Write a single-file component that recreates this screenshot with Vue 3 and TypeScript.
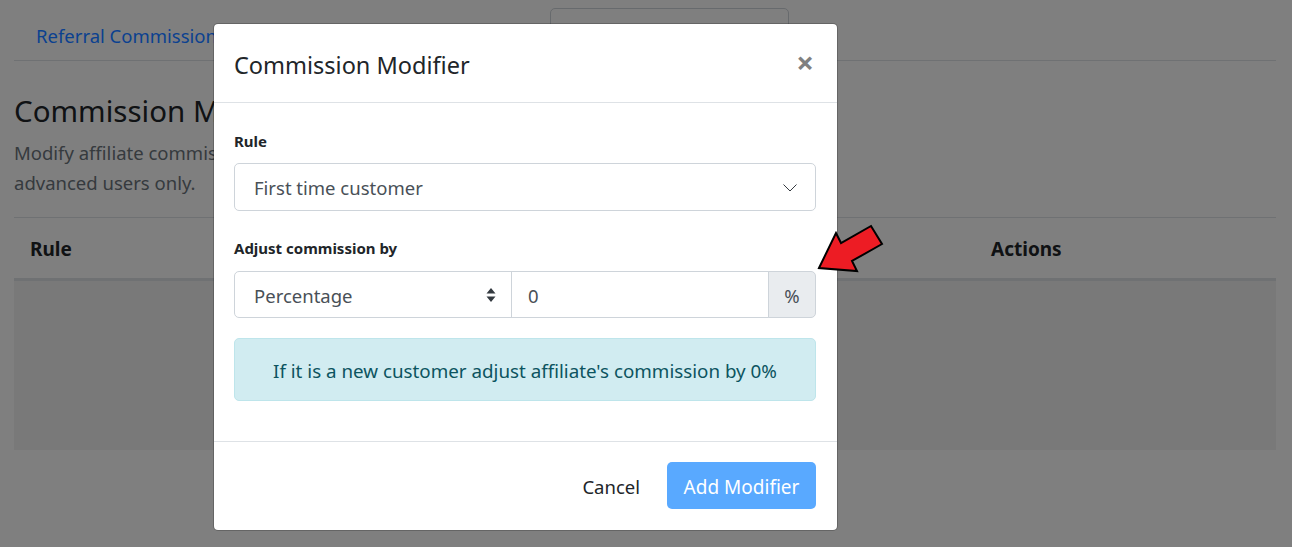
<template>
  <div class="page">
    <nav class="tabs">
      <a class="tab-link">Referral Commission</a>
      <div class="search-box"></div>
    </nav>

    <h2 class="page-title">Commission Modifiers</h2>
    <p class="page-desc">
      Modify affiliate commissions based on rules. This feature is recommended for<br />
      advanced users only.
    </p>

    <div class="table-head">
      <span class="col-rule">Rule</span>
      <span class="col-actions">Actions</span>
    </div>
    <div class="table-body"></div>

    <div class="backdrop"></div>

    <div class="modal">
      <header class="modal-header">
        <h5 class="modal-title">Commission Modifier</h5>
        <span class="close">×</span>
      </header>

      <div class="modal-body">
        <label class="field-label">Rule</label>
        <div class="control rule-select">
          <span>{{ rule }}</span>
          <svg class="chevron" width="14" height="8" viewBox="0 0 14 8">
            <path d="M0.5 0.5 7 7 13.5 0.5" fill="none" stroke="#343a40" stroke-width="1" />
          </svg>
        </div>

        <label class="field-label second">Adjust commission by</label>
        <div class="input-group">
          <div class="control type-select">
            <span>Percentage</span>
            <svg class="updown" width="10" height="14" viewBox="0 0 10 14">
              <path d="M5 0 9.5 5.500H0.500Z M5 14 0.500 8.500H9.500Z" fill="#343a40" />
            </svg>
          </div>
          <div class="control amount">{{ amount }}</div>
          <div class="addon">%</div>
        </div>

        <div class="alert">If it is a new customer adjust affiliate's commission by {{ amount }}%</div>
      </div>

      <footer class="modal-footer">
        <button class="btn btn-link" type="button">Cancel</button>
        <button class="btn btn-primary" type="button">Add Modifier</button>
      </footer>
    </div>

    <svg class="arrow" width="70" height="52" viewBox="0 0 70 52">
      <path
        d="M2 45 19 10 24 20 54 3 65 21 35 38 40 48Z"
        fill="#ed1c24"
        stroke="#000"
        stroke-width="2"
      />
    </svg>
  </div>
</template>

<script setup lang="ts">
const rule: string = 'First time customer'
const amount: number = 0
</script>

<style>
html,
body {
  margin: 0;
  background: #fff;
}
</style>

<style scoped>
.page {
  position: relative;
  height: 547px;
  box-sizing: border-box;
  padding: 0 16px 0 14px;
  overflow: hidden;
  font-family: "Noto Sans", "Open Sans", sans-serif;
  font-size: 18.5px;
  color: #212529;
}

.tabs {
  display: flex;
  height: 60px;
  box-sizing: content-box;
  border-bottom: 1px solid #dee2e6;
  padding-left: 22px;
}

.tab-link {
  position: relative;
  z-index: 1;
  margin-top: 23px;
  color: #0b4190;
  line-height: 26px;
  width: 514px;
}

.search-box {
  width: 237px;
  height: 40px;
  margin-top: 8px;
  border: 1px solid #ced4da;
  border-radius: 5px;
}

.page-title {
  margin: 29px 0 0;
  font-size: 29.5px;
  font-weight: 400;
  line-height: 42px;
}

.page-desc {
  margin: 6px 0 0;
  line-height: 30px;
  color: #6c757d;
}

.table-head {
  display: flex;
  margin-top: 19px;
  height: 64px;
  box-sizing: border-box;
  align-items: center;
  padding: 2px 0 0 16px;
  border-top: 1px solid #dee2e6;
  border-bottom: 3px solid #dee2e6;
  font-size: 19px;
  font-weight: 700;
}

.col-rule {
  width: 961px;
}

.table-body {
  height: 169px;
  background: #f2f2f2;
}

.backdrop {
  position: absolute;
  inset: 0;
  background: rgba(0, 0, 0, 0.5);
}

.modal {
  position: absolute;
  z-index: 2;
  left: 213px;
  top: 23px;
  width: 625px;
  height: 508px;
  box-sizing: border-box;
  display: flex;
  flex-direction: column;
  background: #fff;
  border: 1px solid rgba(0, 0, 0, 0.2);
  border-radius: 5px;
  background-clip: padding-box;
}

.modal-header {
  display: flex;
  justify-content: space-between;
  height: 79px;
  box-sizing: border-box;
  padding: 0 23px 0 20px;
  border-bottom: 1px solid #dee2e6;
}

.modal-title {
  margin: 23px 0 0;
  font-size: 23.5px;
  font-weight: 400;
  line-height: 36px;
}

.close {
  margin-top: 16px;
  font-size: 31px;
  font-weight: 700;
  line-height: 44px;
  color: #808080;
}

.modal-body {
  flex: 1;
  display: flex;
  flex-direction: column;
  padding: 28px 21px 0 20px;
}

.field-label {
  font-size: 15px;
  font-weight: 700;
  line-height: 21px;
  margin-bottom: 11px;
}

.field-label.second {
  margin-top: 27px;
  margin-bottom: 12px;
}

.control {
  display: flex;
  align-items: center;
  box-sizing: border-box;
  height: 48px;
  padding: 1px 19px 0;
  border: 1px solid #ced4da;
  border-radius: 5px;
  color: #495057;
}

.rule-select {
  justify-content: space-between;
  padding-right: 18px;
}

.input-group {
  display: flex;
  height: 47px;
}

.input-group .control {
  height: 47px;
}

.type-select {
  width: 278px;
  justify-content: space-between;
  padding-right: 15px;
  border-radius: 5px 0 0 5px;
}

.amount {
  flex: 1;
  padding-left: 16px;
  margin-left: -1px;
  border-radius: 0;
}

.addon {
  display: flex;
  align-items: center;
  justify-content: center;
  box-sizing: border-box;
  width: 48px;
  padding-top: 1px;
  margin-left: -1px;
  border: 1px solid #ced4da;
  border-radius: 0 5px 5px 0;
  background: #e9ecef;
  color: #495057;
}

.alert {
  margin-top: 20px;
  height: 63px;
  box-sizing: border-box;
  display: flex;
  align-items: center;
  justify-content: center;
  padding-top: 3px;
  border: 1px solid #bee5eb;
  border-radius: 5px;
  background: #d1ecf1;
  color: #0c5460;
  font-size: 18.8px;
}

.modal-footer {
  display: flex;
  justify-content: flex-end;
  align-items: center;
  gap: 10px;
  height: 89px;
  box-sizing: border-box;
  padding: 0 21px 2px 0;
  border-top: 1px solid #dee2e6;
}

.btn {
  height: 47px;
  border: 1px solid transparent;
  border-radius: 5px;
  padding: 3px 16px 0;
  font: inherit;
}

.btn-link {
  background: transparent;
  color: #212529;
}

.btn-primary {
  width: 149px;
  background: #59a9ff;
  color: #fff;
  padding: 3px 0 0;
  font-size: 19px;
}

.arrow {
  position: absolute;
  z-index: 3;
  left: 817px;
  top: 223px;
}
</style>
